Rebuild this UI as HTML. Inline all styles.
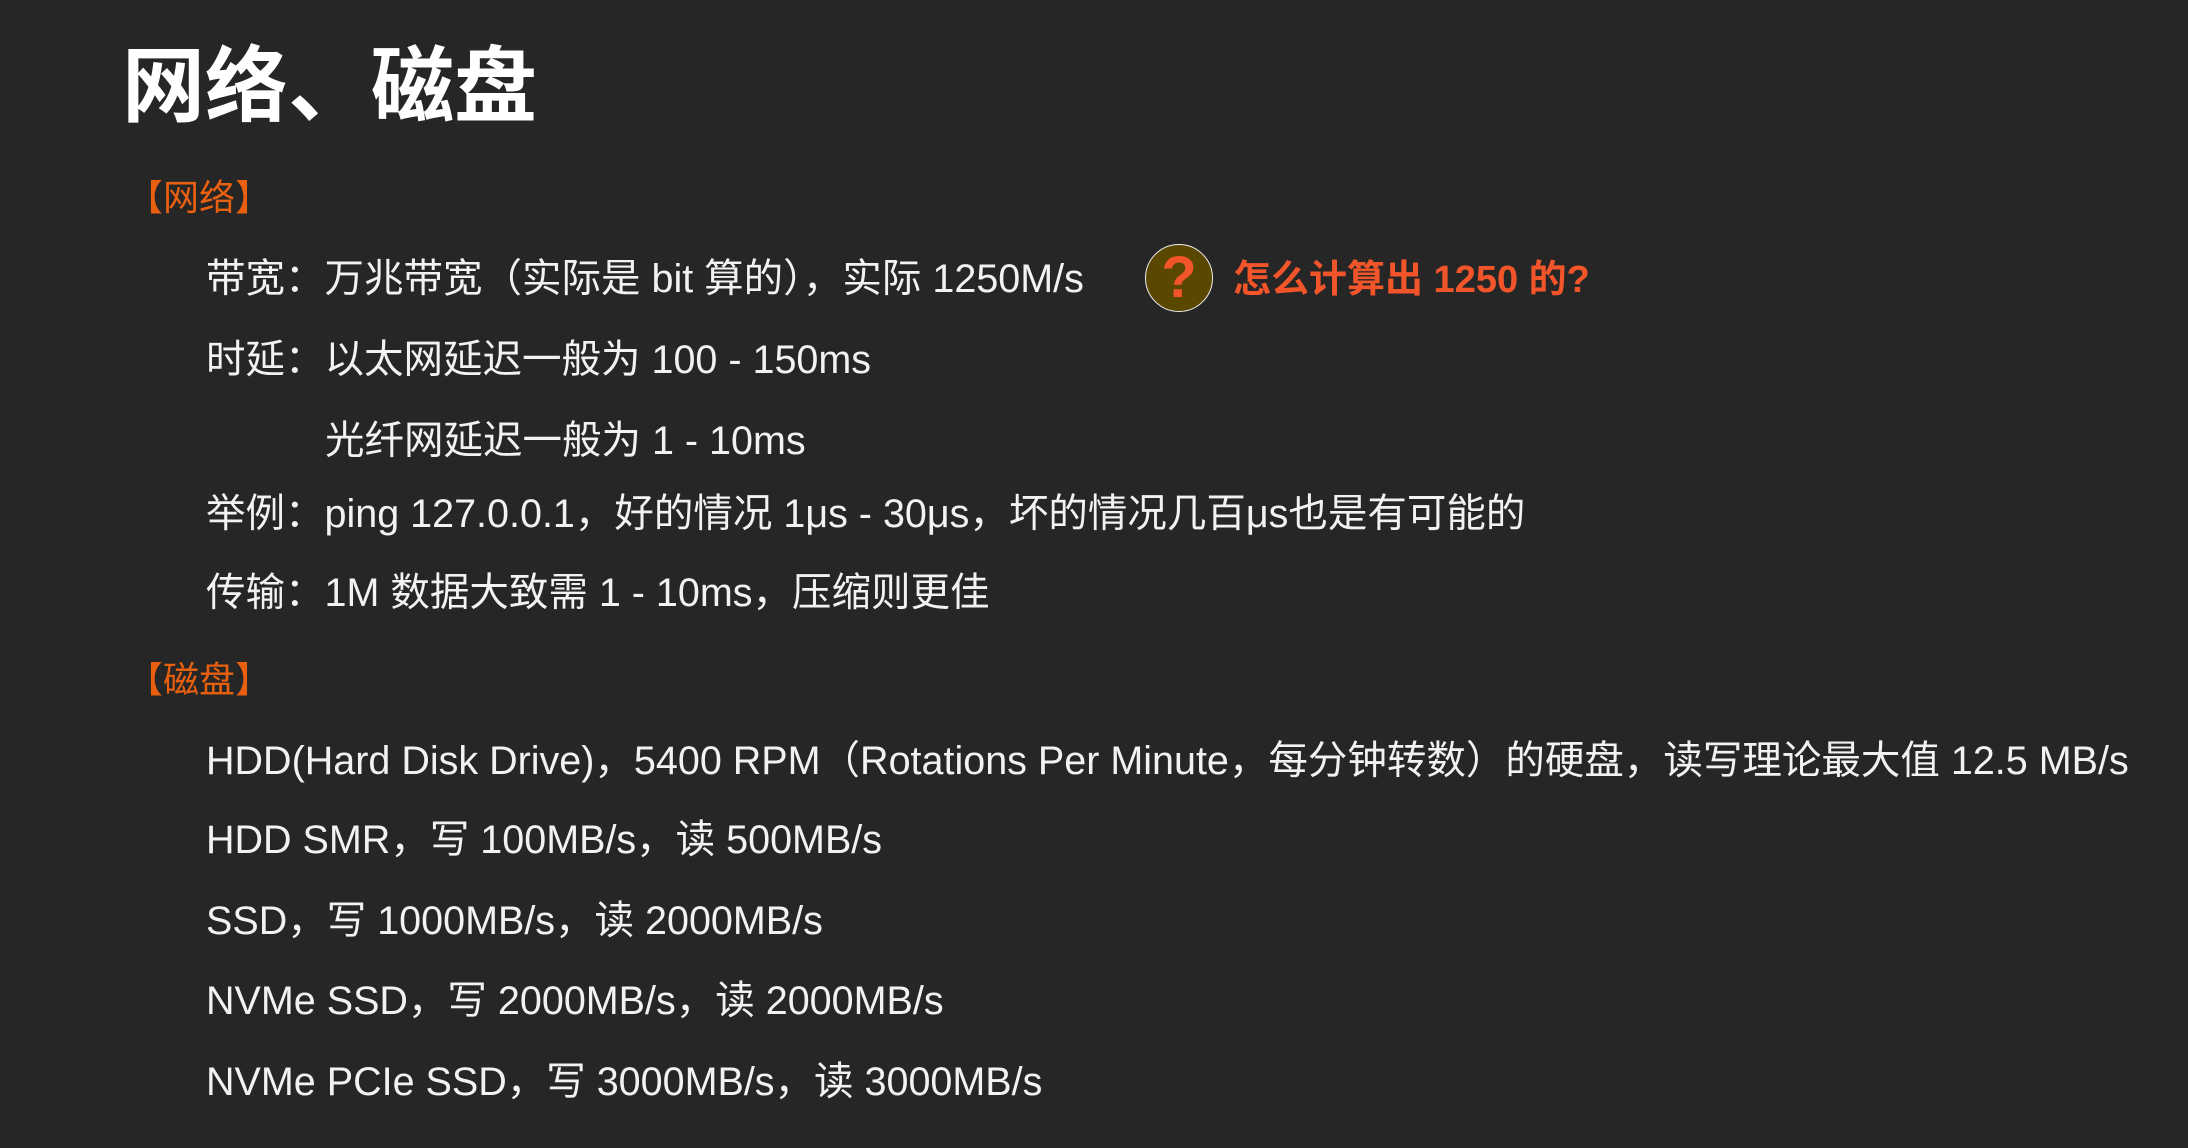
<!DOCTYPE html>
<html><head><meta charset="utf-8"><style>
html,body{margin:0;padding:0}
body{width:2188px;height:1148px;background:#262626;position:relative;overflow:hidden;font-family:"Liberation Sans","Noto Sans CJK SC",sans-serif;color:#fff}
.t{position:absolute;white-space:nowrap;line-height:1}
.h{font-size:83px;font-weight:bold;left:122px;top:45px}
.sec{font-size:36px;color:#e8600f;left:127px}
.l{font-size:39.5px;left:206px;color:#f2f2f2}
.q{position:absolute;left:1145px;top:244px;width:66px;height:66px;border-radius:50%;background:#5a4800;border:1.5px solid #eee;color:#f2552a;font-size:58px;text-align:center;line-height:66px;font-weight:bold}
.red{font-size:38px;color:#f2552a;font-weight:bold;left:1233px}
</style></head><body>
<div class="t h">网络、磁盘</div>
<div class="t sec" style="top:180px">【网络】</div>
<div class="t l" style="top:260px">带宽：万兆带宽（实际是 bit 算的），实际 1250M/s</div>
<div class="q">?</div>
<div class="t red" style="top:261px">怎么计算出 1250 的?</div>
<div class="t l" style="top:341px">时延：以太网延迟一般为 100 - 150ms</div>
<div class="t l" style="top:422px;left:325px">光纤网延迟一般为 1 - 10ms</div>
<div class="t l" style="top:495px">举例：ping 127.0.0.1，好的情况 1μs - 30μs，坏的情况几百μs也是有可能的</div>
<div class="t l" style="top:574px">传输：1M 数据大致需 1 - 10ms，压缩则更佳</div>
<div class="t sec" style="top:662px">【磁盘】</div>
<div class="t l" style="top:742px">HDD(Hard Disk Drive)，5400 RPM（Rotations Per Minute，每分钟转数）的硬盘，读写理论最大值 12.5 MB/s</div>
<div class="t l" style="top:821px">HDD SMR，写 100MB/s，读 500MB/s</div>
<div class="t l" style="top:902px">SSD，写 1000MB/s，读 2000MB/s</div>
<div class="t l" style="top:982px">NVMe SSD，写 2000MB/s，读 2000MB/s</div>
<div class="t l" style="top:1063px">NVMe PCIe SSD，写 3000MB/s，读 3000MB/s</div>
</body></html>
